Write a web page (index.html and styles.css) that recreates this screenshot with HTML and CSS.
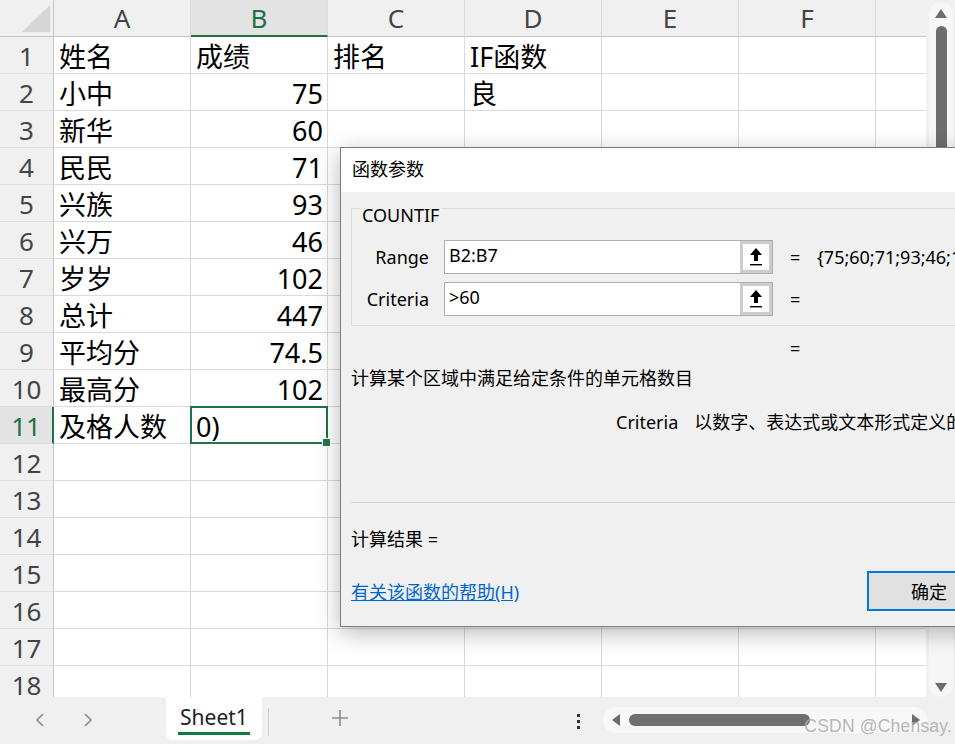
FILE: index.html
```html
<!DOCTYPE html>
<html lang="zh-CN">
<head>
<meta charset="utf-8">
<title>COUNTIF</title>
<link rel="stylesheet" href="styles.css">
</head>
<body>
<div class="main">
  <div class="sheet">
    <div class="hdr">
      <div class="corner"><svg width="28" height="27" viewBox="0 0 28 27"><polygon points="28,0 28,27 0,27" fill="#d6d6d6"/></svg></div>
      <div class="ch">A</div><div class="ch on">B</div><div class="ch">C</div><div class="ch">D</div><div class="ch">E</div><div class="ch">F</div><div class="ch g"></div>
    </div>
    <div class="row"><div class="rh">1</div><div class="c">姓名</div><div class="c">成绩</div><div class="c">排名</div><div class="c">IF函数</div><div class="c"></div><div class="c"></div><div class="c g"></div></div>
    <div class="row"><div class="rh">2</div><div class="c">小中</div><div class="c num">75</div><div class="c"></div><div class="c">良</div><div class="c"></div><div class="c"></div><div class="c g"></div></div>
    <div class="row"><div class="rh">3</div><div class="c">新华</div><div class="c num">60</div><div class="c"></div><div class="c"></div><div class="c"></div><div class="c"></div><div class="c g"></div></div>
    <div class="row"><div class="rh">4</div><div class="c">民民</div><div class="c num">71</div><div class="c"></div><div class="c"></div><div class="c"></div><div class="c"></div><div class="c g"></div></div>
    <div class="row"><div class="rh">5</div><div class="c">兴族</div><div class="c num">93</div><div class="c"></div><div class="c"></div><div class="c"></div><div class="c"></div><div class="c g"></div></div>
    <div class="row"><div class="rh">6</div><div class="c">兴万</div><div class="c num">46</div><div class="c"></div><div class="c"></div><div class="c"></div><div class="c"></div><div class="c g"></div></div>
    <div class="row"><div class="rh">7</div><div class="c">岁岁</div><div class="c num">102</div><div class="c"></div><div class="c"></div><div class="c"></div><div class="c"></div><div class="c g"></div></div>
    <div class="row"><div class="rh">8</div><div class="c">总计</div><div class="c num">447</div><div class="c"></div><div class="c"></div><div class="c"></div><div class="c"></div><div class="c g"></div></div>
    <div class="row"><div class="rh">9</div><div class="c">平均分</div><div class="c num">74.5</div><div class="c"></div><div class="c"></div><div class="c"></div><div class="c"></div><div class="c g"></div></div>
    <div class="row"><div class="rh">10</div><div class="c">最高分</div><div class="c num">102</div><div class="c"></div><div class="c"></div><div class="c"></div><div class="c"></div><div class="c g"></div></div>
    <div class="row"><div class="rh on">11</div><div class="c">及格人数</div><div class="c sel">0)</div><div class="c"></div><div class="c"></div><div class="c"></div><div class="c"></div><div class="c g"></div></div>
    <div class="row"><div class="rh">12</div><div class="c"></div><div class="c"></div><div class="c"></div><div class="c"></div><div class="c"></div><div class="c"></div><div class="c g"></div></div>
    <div class="row"><div class="rh">13</div><div class="c"></div><div class="c"></div><div class="c"></div><div class="c"></div><div class="c"></div><div class="c"></div><div class="c g"></div></div>
    <div class="row"><div class="rh">14</div><div class="c"></div><div class="c"></div><div class="c"></div><div class="c"></div><div class="c"></div><div class="c"></div><div class="c g"></div></div>
    <div class="row"><div class="rh">15</div><div class="c"></div><div class="c"></div><div class="c"></div><div class="c"></div><div class="c"></div><div class="c"></div><div class="c g"></div></div>
    <div class="row"><div class="rh">16</div><div class="c"></div><div class="c"></div><div class="c"></div><div class="c"></div><div class="c"></div><div class="c"></div><div class="c g"></div></div>
    <div class="row"><div class="rh">17</div><div class="c"></div><div class="c"></div><div class="c"></div><div class="c"></div><div class="c"></div><div class="c"></div><div class="c g"></div></div>
    <div class="row"><div class="rh">18</div><div class="c"></div><div class="c"></div><div class="c"></div><div class="c"></div><div class="c"></div><div class="c"></div><div class="c g"></div></div>
  </div>
  <div class="vscroll">
    <div class="vtrack">
      <svg class="varrow" width="12" height="9" viewBox="0 0 12 9"><polygon points="6,0 12,9 0,9" fill="#6e6e6e"/></svg>
      <div class="vthumb"></div>
      <div class="vfill"></div>
      <svg class="varrow" width="12" height="9" viewBox="0 0 12 9"><polygon points="0,0 12,0 6,9" fill="#6e6e6e"/></svg>
    </div>
  </div>
</div>

<div class="tabbar">
  <div class="nav">
    <svg width="10" height="14" viewBox="0 0 10 14"><polyline points="8,1 2,7 8,13" fill="none" stroke="#8c8c8c" stroke-width="1.6"/></svg>
    <svg width="10" height="14" viewBox="0 0 10 14"><polyline points="2,1 8,7 2,13" fill="none" stroke="#8c8c8c" stroke-width="1.6"/></svg>
  </div>
  <div class="tab"><span class="tabname">Sheet1</span><span class="tabline"></span></div>
  <div class="tsep"></div>
  <div class="plus"><svg width="16" height="16" viewBox="0 0 16 16"><path d="M8 0V16M0 8H16" stroke="#8a8a8a" stroke-width="1.6"/></svg></div>
  <div class="more"><span></span><span></span><span></span></div>
  <div class="hscroll">
    <svg width="8" height="12" viewBox="0 0 8 12"><polygon points="8,0 8,12 0,6" fill="#6e6e6e"/></svg>
    <div class="hthumb"></div>
    <div class="hfill"></div>
    <svg width="8" height="12" viewBox="0 0 8 12"><polygon points="0,0 8,6 0,12" fill="#6e6e6e"/></svg>
  </div>
  <div class="watermark">CSDN @Chensay.</div>
</div>

<div class="dialog">
  <div class="dtitle">函数参数</div>
  <div class="dbody">
    <fieldset class="fbox">
      <legend>COUNTIF</legend>
      <div class="prow">
        <div class="plabel">Range</div>
        <div class="pinput"><span class="val">B2:B7</span><span class="ref"><svg width="14" height="20" viewBox="0 0 14 20"><polygon points="7,1 13,8 9,8 9,14 5,14 5,8 1,8" fill="#000"/><rect x="1" y="17" width="12" height="1.4" fill="#000"/></svg></span></div>
        <div class="peq">=</div>
        <div class="pres">{75;60;71;93;46;102}</div>
      </div>
      <div class="prow second">
        <div class="plabel">Criteria</div>
        <div class="pinput"><span class="val">&gt;60</span><span class="ref"><svg width="14" height="20" viewBox="0 0 14 20"><polygon points="7,1 13,8 9,8 9,14 5,14 5,8 1,8" fill="#000"/><rect x="1" y="17" width="12" height="1.4" fill="#000"/></svg></span></div>
        <div class="peq">=</div>
      </div>
    </fieldset>
    <div class="feq">=</div>
    <div class="desc">计算某个区域中满足给定条件的单元格数目</div>
    <div class="argdesc"><span class="argname">Criteria</span>以数字、表达式或文本形式定义的条件</div>
    <div class="dsep"></div>
    <div class="result">计算结果 =</div>
    <div class="dfoot">
      <a class="help" href="#">有关该函数的帮助(H)</a>
      <button class="ok">确定</button>
    </div>
  </div>
</div>
</body>
</html>
```

FILE: styles.css
```css
* { box-sizing: border-box; }
html, body {
  margin: 0;
  width: 955px;
  height: 744px;
  overflow: hidden;
}
body {
  position: relative;
  background: #f0f0f0;
  font-family: "Noto Sans", "Noto Sans CJK SC", sans-serif;
  color: #000;
}

/* ---------- grid ---------- */
.main { display: flex; height: 697px; }
.sheet { width: 926px; height: 697px; overflow: hidden; background: #fff; }
.hdr { display: flex; height: 37px; background: #f0f0f0; }
.corner {
  width: 54px;
  border-right: 1px solid #c6c6c6;
  border-bottom: 1px solid #c6c6c6;
  display: flex;
  align-items: flex-end;
  justify-content: flex-end;
  padding: 0 3px 4px 0;
}
.corner svg { display: block; }
.ch {
  width: 137px;
  flex: none;
  border-right: 1px solid #dadada;
  border-bottom: 1px solid #c6c6c6;
  text-align: center;
  font-size: 26px;
  line-height: 37px;
  color: #444;
}
.ch.g { width: 50px; border-right: none; }
.ch.on {
  background: #e3e3e3;
  color: #1e7145;
  border-bottom: 2px solid #1e7145;
}
.row { display: flex; height: 37px; }
.rh {
  width: 54px;
  flex: none;
  background: #f0f0f0;
  border-right: 1px solid #c6c6c6;
  border-bottom: 1px solid #dedede;
  text-align: center;
  font-size: 26px;
  line-height: 38px;
  color: #444;
}
.rh.on {
  background: #e3e3e3;
  color: #1e7145;
  border-right: 2px solid #1e7145;
}
.c {
  width: 137px;
  flex: none;
  border-right: 1px solid #dadada;
  border-bottom: 1px solid #dadada;
  padding: 1px 5px 0;
  font-size: 27px;
  line-height: 37px;
  white-space: nowrap;
  color: #000;
}
.c.g { width: 50px; border-right: none; }
.c.num { text-align: right; padding-right: 4px; }
.c.sel { position: relative; }
.c.sel::after {
  content: "";
  position: absolute;
  inset: -1px;
  border: 2px solid #217346;
}
.c.sel::before {
  content: "";
  position: absolute;
  right: -4px;
  bottom: -4px;
  width: 7px;
  height: 7px;
  background: #217346;
  border: 1px solid #fff;
  z-index: 2;
}

/* ---------- vertical scrollbar ---------- */
.vscroll { width: 29px; height: 697px; padding: 2px 2px 0 3px; background: #f0f0f0; }
.vtrack {
  height: 100%;
  background: #f7f7f7;
  border-radius: 12px;
  display: flex;
  flex-direction: column;
  align-items: center;
  padding: 7px 0 5px;
}
.varrow { display: block; flex: none; }
.vthumb {
  margin-top: 8px;
  width: 11px;
  height: 360px;
  border-radius: 6px;
  background: #6e6e6e;
  flex: none;
}
.vfill { flex: 1; }

/* ---------- tab bar ---------- */
.tabbar { height: 47px; display: flex; align-items: flex-start; position: relative; }
.nav { width: 166px; flex: none; display: flex; padding: 16px 0 0 35px; gap: 38px; }
.nav svg { display: block; }
.tab {
  width: 96px;
  height: 43px;
  flex: none;
  background: #fff;
  border-radius: 0 0 7px 7px;
  display: flex;
  flex-direction: column;
  align-items: center;
  padding-top: 5px;
}
.tabname { font-size: 21px; line-height: 30px; color: #222; }
.tabline { width: 72px; height: 3px; background: #107c41; margin-top: 0; }
.tsep { width: 1px; height: 28px; background: #cfcfcf; margin: 11px 0 0 6px; flex: none; }
.plus { margin: 13px 0 0 63px; flex: none; }
.plus svg { display: block; }
.more {
  margin: 17px 0 0 229px;
  width: 4px;
  display: flex;
  flex-direction: column;
  gap: 3px;
  flex: none;
}
.more span { width: 3px; height: 3px; background: #333; }
.hscroll {
  margin: 10px 0 0 22px;
  width: 324px;
  height: 26px;
  background: #f8f8f8;
  border-radius: 13px;
  display: flex;
  align-items: center;
  padding: 0 7px 0 9px;
  flex: none;
}
.hscroll svg { display: block; flex: none; }
.hthumb { width: 181px; height: 12px; border-radius: 6px; background: #6e6e6e; margin-left: 9px; flex: none; }
.hfill { flex: 1; }
.watermark {
  position: absolute;
  right: 3px;
  bottom: 8px;
  font-family: "Liberation Sans", Arial, sans-serif;
  font-size: 17.5px;
  line-height: 20px;
  color: rgba(175, 175, 175, 0.9);
  letter-spacing: 0.2px;
}

/* ---------- dialog ---------- */
.dialog {
  position: absolute;
  left: 340px;
  top: 147px;
  width: 660px;
  height: 480px;
  border: 1px solid #7c7c7c;
  background: #f0f0f0;
  box-shadow: 0 6px 22px rgba(0, 0, 0, 0.28);
  font-size: 18px;
  color: #000;
}
.dtitle { height: 44px; background: #fff; padding-left: 11px; line-height: 42px; }
.dbody { padding: 0 0 0 10px; }
.fbox {
  margin: 0;
  width: 640px;
  border: 1px solid #dcdcdc;
  padding: 0 0 9px 0;
  min-width: 0;
}
.fbox legend {
  margin-left: 8px;
  padding: 14px 2px 0;
  line-height: 18px;
  font-size: 18px;
}
.prow { display: flex; align-items: center; height: 34px; margin-top: 16px; }
.prow.second { margin-top: 8px; }
.plabel { width: 77px; text-align: right; margin-right: 15px; line-height: 24px; }
.pinput {
  width: 329px;
  height: 34px;
  border: 1px solid #adadad;
  background: #fff;
  display: flex;
  flex: none;
}
.pinput .val { flex: 1; padding-left: 4px; line-height: 28px; }
.ref {
  width: 32px;
  border: 3px solid #cdcdcd;
  background: #fff;
  display: flex;
  align-items: center;
  justify-content: center;
}
.ref svg { display: block; }
.peq { margin-left: 17px; width: 27px; }
.pres { white-space: nowrap; }
.feq { margin: 10px 0 0 439px; line-height: 24px; height: 24px; }
.desc { margin-top: 6px; line-height: 24px; }
.argdesc { margin: 20px 0 0 265px; line-height: 24px; white-space: nowrap; }
.argname { margin-right: 16px; }
.dsep { margin-top: 68px; height: 1px; background: #d9d9d9; }
.result { margin-top: 24px; line-height: 24px; }
.dfoot {
  margin-top: 20px;
  height: 40px;
  display: grid;
  grid-template-columns: 516px 124px;
  align-items: center;
}
.help { color: #0066cc; text-decoration: underline; font-size: 18px; justify-self: start; }
.ok {
  height: 40px;
  width: 124px;
  border: 2px solid #0078d4;
  background: #e1e1e1;
  font-family: "Noto Sans", "Noto Sans CJK SC", sans-serif;
  font-size: 18px;
  color: #000;
  padding: 0;
}
```
